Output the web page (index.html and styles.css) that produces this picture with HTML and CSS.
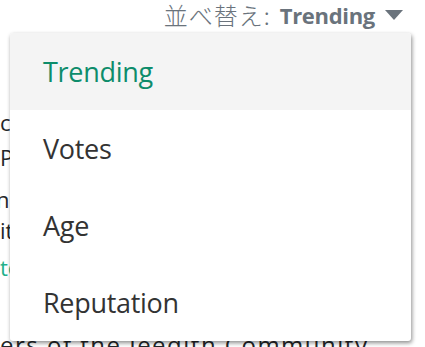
FILE: index.html
```html
<!DOCTYPE html>
<html>
<head>
<meta charset="utf-8">
<link rel="stylesheet" href="styles.css">
</head>
<body>
<div class="page">
  <div class="sortbar">
    <span class="sort-label">並べ替え:</span>
    <span class="sort-value">Trending</span>
    <span class="caret"></span>
  </div>
  <div class="bg">
    <p class="l1">community answers</p>
    <p class="l2">Pro tips for newcomers</p>
    <p class="l3 cut">ne questions asked</p>
    <p class="l4">it answers here</p>
    <p class="l5 link">top contributors</p>
    <p class="l6">ers of the Jeedith Community</p>
  </div>
  <div class="menu">
    <div class="item active">Trending</div>
    <div class="item">Votes</div>
    <div class="item">Age</div>
    <div class="item">Reputation</div>
  </div>
</div>
</body>
</html>
```

FILE: styles.css
```css
html, body {
  margin: 0;
  padding: 0;
  background: #fff;
}
body {
  font-family: "Open Sans", "Noto Sans", "Noto Sans CJK JP", sans-serif;
  width: 425px;
  height: 347px;
  overflow: hidden;
}
.page {
  position: relative;
  width: 425px;
  height: 347px;
  overflow: hidden;
}
.sortbar {
  display: flex;
  justify-content: flex-end;
  align-items: center;
  gap: 9px;
  padding: 0 22px 0 0;
  height: 30px;
  line-height: 30px;
  color: #6a737c;
  font-size: 22px;
}
.sort-label {
  font-family: "Noto Sans CJK JP", sans-serif;
  font-weight: 300;
  font-size: 24px;
  letter-spacing: 1px;
}
.sort-value {
  font-weight: 700;
  letter-spacing: -0.3px;
}
.caret {
  width: 0;
  height: 0;
  border-left: 9px solid transparent;
  border-right: 9px solid transparent;
  border-top: 10px solid #6a737c;
  margin-left: 1px;
}
.bg {
  font-size: 22px;
  color: #242729;
}
.bg p {
  margin: 0;
  white-space: nowrap;
  line-height: 30px;
}
.l1 { margin-top: 77px !important; }
.l2 { margin-top: 5px !important; }
.l3 { margin-top: 12px !important; }
.l4 { margin-top: 1px !important; }
.l5 { margin-top: 7px !important; }
.l6 {
  margin-top: 48px !important;
  font-size: 24px;
  letter-spacing: 1.5px;
}
.cut { text-indent: -4px; }
.link { color: #22b08a; }
.menu {
  position: absolute;
  left: 10px;
  top: 33px;
  width: 401px;
  background: #fff;
  border-radius: 3px;
  box-shadow: 1px 2px 4px rgba(0,0,0,0.45);
  overflow: hidden;
  display: flex;
  flex-direction: column;
}
.item {
  height: 77px;
  display: flex;
  align-items: center;
  padding-left: 33px;
  font-size: 27px;
  color: #333;
  letter-spacing: -0.3px;
}
.item.active {
  background: #f4f4f4;
  color: #0d8c6b;
}
```
